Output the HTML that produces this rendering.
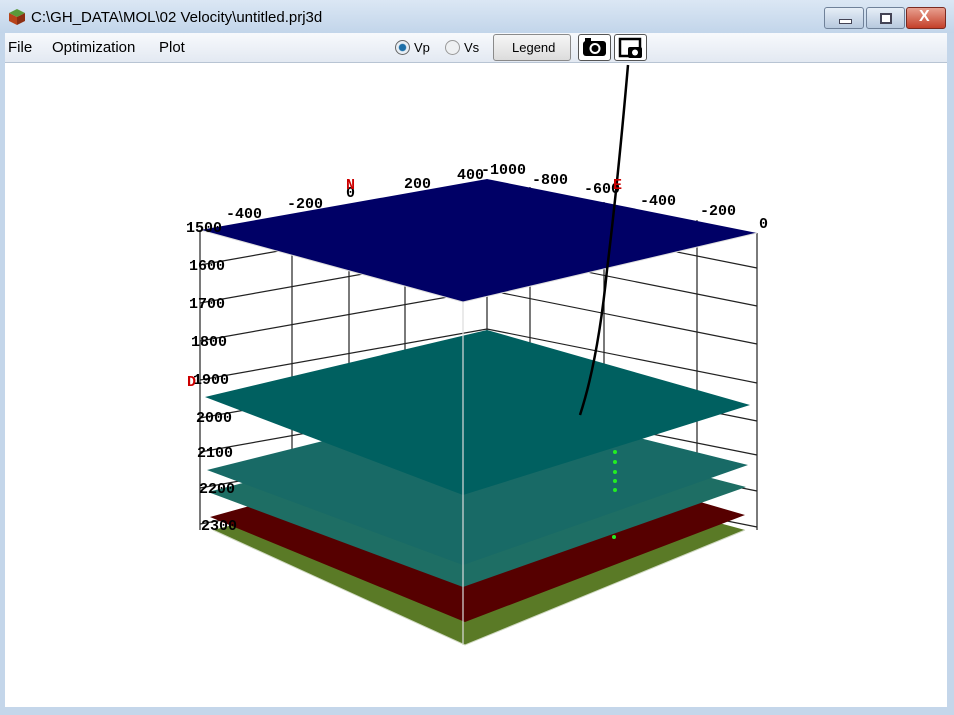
<!DOCTYPE html>
<html><head><meta charset="utf-8"><style>
body{margin:0;width:954px;height:715px;overflow:hidden;background:#c4d6ea;font-family:"Liberation Sans",sans-serif;position:relative}
.tb{position:absolute;left:0;top:0;width:954px;height:33px;background:linear-gradient(#dbe7f4,#c2d5ea)}
.title{position:absolute;left:31px;top:9px;font-size:15px;color:#000}
.menu{position:absolute;left:5px;top:33px;width:942px;height:29px;background:linear-gradient(#f7f9fc,#e3e9f2);border-bottom:1px solid #b8c4d3}
.menu span{position:absolute;top:6px;font-size:15px}
.canvas{position:absolute;left:5px;top:63px;width:942px;height:644px;background:#fff}
.wb{position:absolute;top:7px;height:20px;border:1px solid #6f8199;border-radius:3px;background:linear-gradient(#e6eef7,#b7c9de)}
.btn{position:absolute;border:1px solid #8a8a8a;border-radius:3px;background:linear-gradient(#f6f6f6,#dcdcdc)}
</style></head><body>
<div class="tb">
<svg style="position:absolute;left:8px;top:8px" width="18" height="18"><polygon points="9,1 17,5 9,9 1,5" fill="#5a9a3a"/><polygon points="1,5 9,9 9,17 1,13" fill="#b8431a"/><polygon points="17,5 9,9 9,17 17,13" fill="#8c2e12"/></svg>
<div class="title">C:\GH_DATA\MOL\02 Velocity\untitled.prj3d</div>
<div class="wb" style="left:824px;width:38px"><div style="position:absolute;left:14px;top:11px;width:11px;height:3px;background:#fff;border:1px solid #445"></div></div>
<div class="wb" style="left:866px;width:37px"><div style="position:absolute;left:13px;top:5px;width:8px;height:7px;border:2px solid #445;background:#fff"></div></div>
<div class="wb" style="left:906px;width:38px;background:linear-gradient(#e8a090,#c4402a);border-color:#7a2a20"><div style="position:absolute;left:12px;top:0;color:#fff;font-weight:bold;font-size:16px">X</div></div>
</div>
<div class="menu">
<span style="left:3px">File</span><span style="left:47px">Optimization</span><span style="left:154px">Plot</span>
<div style="position:absolute;left:390px;top:7px;width:13px;height:13px;border-radius:50%;border:1px solid #666;background:radial-gradient(#1d6fa8 35%,#e8eef4 45%)"></div>
<span style="left:409px;font-size:13px;top:7px">Vp</span>
<div style="position:absolute;left:440px;top:7px;width:13px;height:13px;border-radius:50%;border:1px solid #999;background:#eef0f2"></div>
<span style="left:459px;font-size:13px;top:7px">Vs</span>
<div class="btn" style="left:488px;top:1px;width:76px;height:25px"><span style="position:absolute;left:18px;top:5px;font-size:13px">Legend</span></div>
<div class="btn" style="left:573px;top:1px;width:31px;height:25px;background:#fff;border-color:#555"><svg width="31" height="25"><rect x="4" y="6" width="23" height="15" rx="3" fill="#000"/><rect x="6" y="3" width="6" height="4" fill="#000"/><circle cx="16" cy="13.5" r="5.5" fill="#fff"/><circle cx="16" cy="13.5" r="3.5" fill="#000"/></svg></div>
<div class="btn" style="left:609px;top:1px;width:31px;height:25px;background:#fff;border-color:#555"><svg width="31" height="25"><rect x="5" y="4" width="20" height="17" fill="none" stroke="#000" stroke-width="2.5"/><rect x="13" y="12" width="14" height="11" rx="2" fill="#000"/><circle cx="20" cy="17.5" r="3" fill="#fff"/></svg></div>
</div>
<div class="canvas"></div>
<svg style="position:absolute;left:0;top:0" width="954" height="715">
<g stroke="#222" stroke-width="1.2" fill="none">
<!-- left wall horizontals -->
<path d="M200 265L487 214L757 268M200 303L487 252L757 306M200 341L487 290L757 344M200 380L487 329L757 383M200 418L487 367L757 421M200 452L487 401L757 455M200 488L487 437L757 491M200 524L487 473L757 527"/>
<path d="M292 214V560M349 204V575M405 194V590M487 179V500M530 187V480M604 202V480M697 220V480M757 233V530M200 230V530"/>
</g>
<!-- planes bottom to top -->
<polygon points="213,530 487,460 745,530 465,645" fill="#5a7a26"/>
<polygon points="210,517 487,440 745,515 465,622" fill="#560000"/>
<polygon points="208,492 487,420 746,487 463,587" fill="#1e6e64"/>
<polygon points="207,470 487,400 748,465 463,565" fill="#186a66"/>
<polygon points="205,397 487,330 750,405 463,495" fill="#006060"/>
<line x1="463" y1="302" x2="463" y2="645" stroke="#ddd" stroke-width="1.2"/>
<path d="M213 530L465 645L745 530" stroke="#cfd8c0" fill="none" stroke-width="1"/>
<polygon points="200,230 487,179 757,233 463,302" fill="#000066"/>
<path d="M200 230L463 302L757 233" stroke="#ddd" fill="none" stroke-width="1"/>
<path d="M628 65Q618 180 607 270Q598 360 580 415" stroke="#000" stroke-width="2.5" fill="none"/>
<g fill="#22ee22"><circle cx="615" cy="452" r="2"/><circle cx="615" cy="462" r="2"/><circle cx="615" cy="472" r="2"/><circle cx="615" cy="481" r="2"/><circle cx="615" cy="490" r="2"/><circle cx="614" cy="537" r="2"/></g>
<g font-family="Liberation Mono,monospace" font-size="15" fill="#000" font-weight="bold">
<text x="226" y="218">-400</text><text x="287" y="208">-200</text><text x="346" y="197">0</text><text x="404" y="188">200</text><text x="457" y="179">400</text><text x="481" y="174">-1000</text><text x="532" y="184">-800</text><text x="584" y="193">-600</text><text x="640" y="205">-400</text><text x="700" y="215">-200</text><text x="759" y="228">0</text>
<text x="186" y="232">1500</text><text x="189" y="270">1600</text><text x="189" y="308">1700</text><text x="191" y="346">1800</text><text x="193" y="384">1900</text><text x="196" y="422">2000</text><text x="197" y="457">2100</text><text x="199" y="493">2200</text><text x="201" y="530">2300</text>
</g>
<g font-family="Liberation Mono,monospace" font-size="15" fill="#cc0000" font-weight="bold"><text x="346" y="189">N</text><text x="613" y="189">E</text><text x="187" y="386">D</text></g>
</svg>
</body></html>
